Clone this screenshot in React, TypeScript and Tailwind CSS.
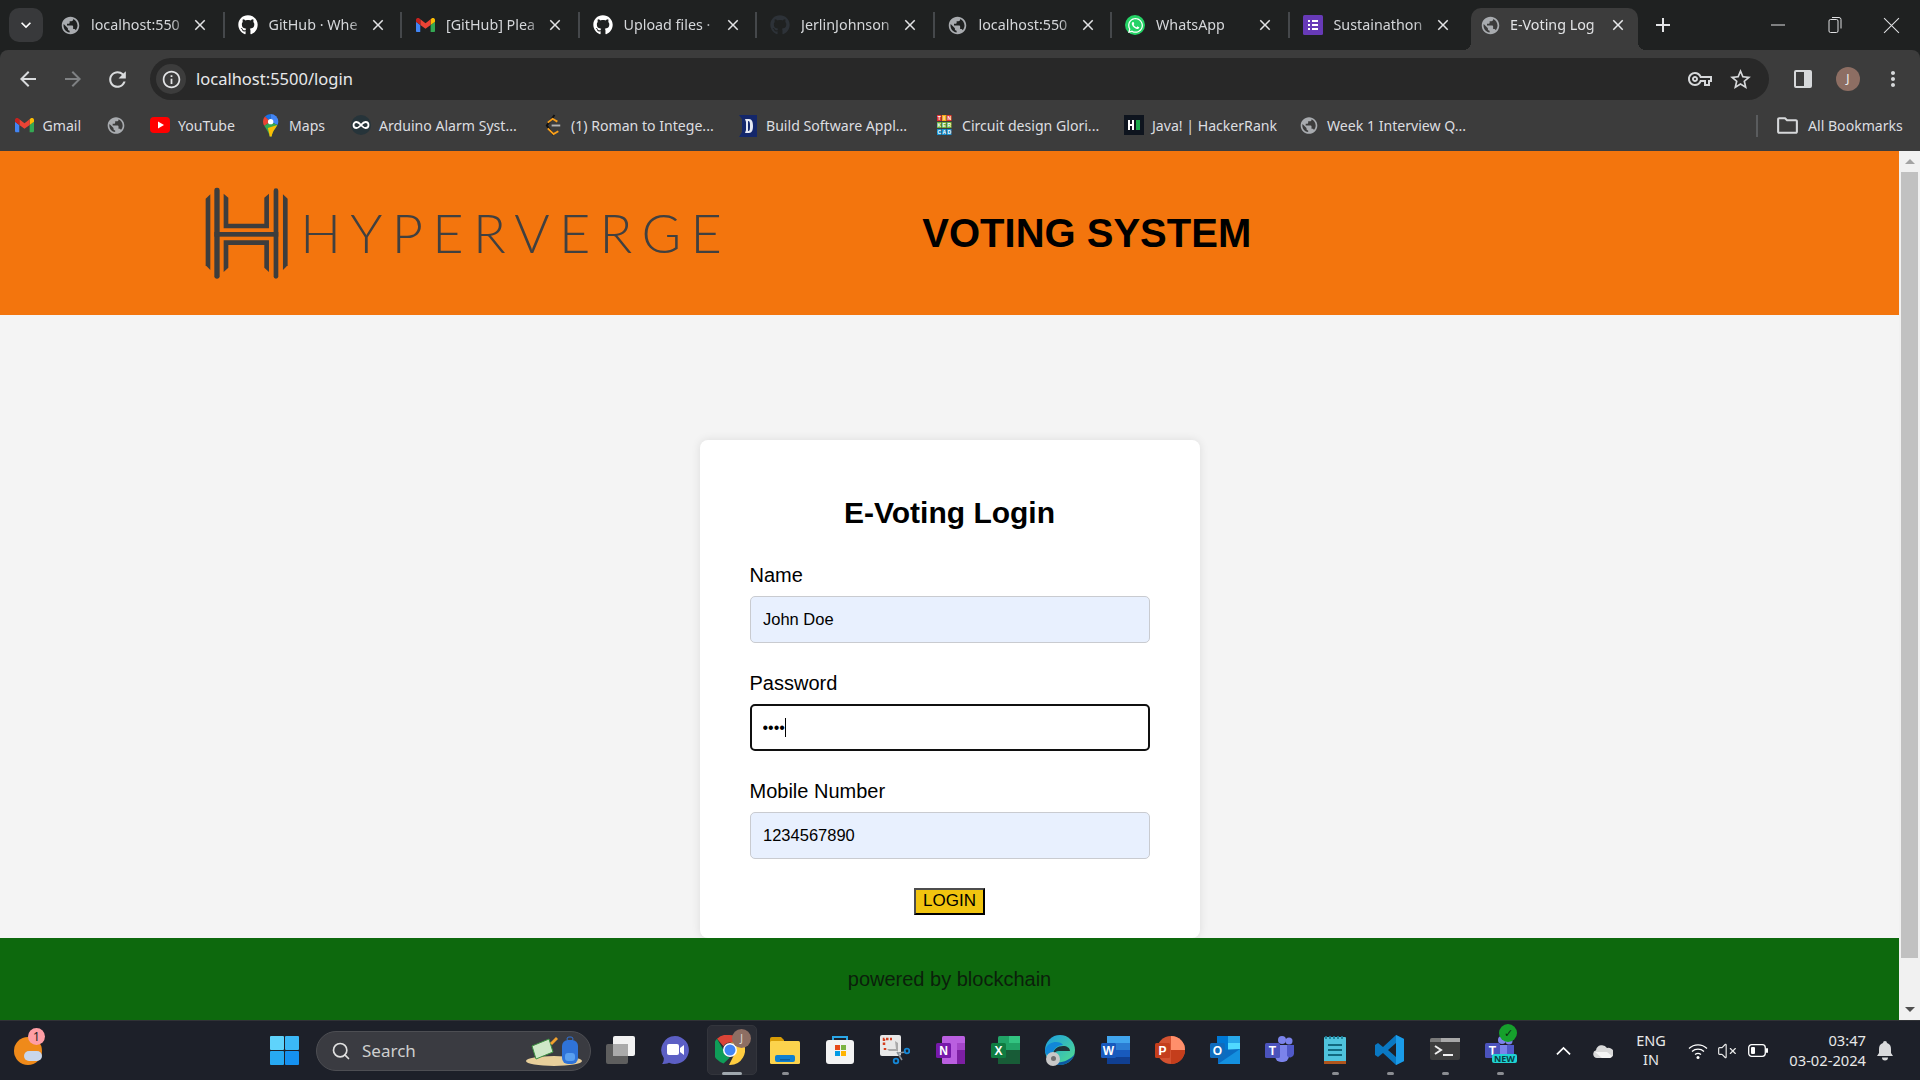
import React from "react";
import {
  MdArrowBack,
  MdArrowForward,
  MdClose,
  MdInfoOutline,
  MdKeyboardArrowDown,
  MdAdd,
  MdMoreVert,
  MdOutlineFolder,
  MdOutlineVpnKey,
  MdPublic,
  MdRefresh,
  MdStarBorder,
} from "react-icons/md";
import { FaGithub, FaWhatsapp } from "react-icons/fa";
import { Search, VolumeX, Infinity as InfinityIcon } from "lucide-react";

const Globe = () => <MdPublic className="size-[21px] text-[#a8abaf]" />;

const Gmail = () => (
  <svg viewBox="0 0 24 18" className="w-[19px]">
    <path fill="#4285f4" d="M1.6 18h3.8V8.7L0 4.6v11.8C0 17.3.7 18 1.6 18z" />
    <path fill="#34a853" d="M18.5 18h3.8c.9 0 1.7-.7 1.7-1.6V4.6l-5.5 4.1" />
    <path fill="#fbbc04" d="M18.5 1.6v7.1L24 4.6V2.4C24 .4 21.7-.8 20.1.4" />
    <path fill="#ea4335" d="M5.5 8.7V1.6L12 6.5l6.5-4.9v7.1L12 13.6" />
    <path fill="#c5221f" d="M0 2.4v2.2l5.5 4.1V1.6L3.9.4C2.3-.8 0 .4 0 2.4z" />
  </svg>
);

const Sheets = () => (
  <svg viewBox="0 0 20 20" className="size-5">
    <rect width="20" height="20" rx="1.5" fill="#673ab7" />
    <path d="M5 5h2v2H5zM5 9h2v2H5zM5 13h2v2H5zM9 5h6v2H9zM9 9h6v2H9zM9 13h6v2H9z" fill="#fff" />
  </svg>
);

const Youtube = () => (
  <svg viewBox="0 0 20 20" className="size-5">
    <rect y="2" width="20" height="16" rx="4" fill="#f00" />
    <path d="M8 6.5v7l6-3.5z" fill="#fff" />
  </svg>
);

const MapsPin = () => (
  <svg viewBox="0 0 16 24" className="h-[23px]">
    <path d="M8 0a8 8 0 0 0-6 2.700L8 8z" fill="#1a73e8" />
    <path d="M8 0a8 8 0 0 1 8 8 8 8 0 0 1-1 3.500L8 8z" fill="#4285f4" />
    <path d="M2 2.700A8 8 0 0 0 0 8c0 1.600.5 3 1.300 4.300L8 8z" fill="#ea4335" />
    <path d="M1.300 12.300 8 8l7 3.500c-1.500 3-5 6-6 12H7c-.6-4-3.700-7.700-5.700-11.200z" fill="#34a853" />
    <path d="M5 14.500 15 11.500c-1.500 3-5 6-6 12H7c-.3-3-1-5-2-9z" fill="#fbbc04" />
    <circle cx="8" cy="8" r="2.800" fill="#fff" />
  </svg>
);

const Arduino = () => (
  <div className="flex size-5 items-center justify-center rounded-full bg-[#26343a]">
    <InfinityIcon className="size-[18px] text-white" strokeWidth={2.4} />
  </div>
);

const Leetcode = () => (
  <svg viewBox="0 0 20 24" className="h-[23px]">
    <path d="M12 1 4 12l7 10" fill="none" stroke="#111" strokeWidth="2" />
    <path d="M9 12h9" stroke="#b3b3b3" strokeWidth="2" />
    <path d="M5 15l6 6 5-3" fill="none" stroke="#f89f1b" strokeWidth="2" />
    <path d="M5 9l5-4 5 3" fill="none" stroke="#f89f1b" strokeWidth="2" />
  </svg>
);

const Duke = () => (
  <svg viewBox="0 0 20 22" className="h-[22px]">
    <path d="M1 0h18v22H1l3-5V4z" fill="#14276b" />
    <path d="M7 4h4c3 0 4 3 4 7s-1 7-4 7H7l1-3V7zm3 2v10c2 0 2-2 2-5s0-5-2-5z" fill="#e6e9f3" />
  </svg>
);

const Tinkercad = () => (
  <svg viewBox="0 0 15 20" className="h-5 w-[15px]">
    {[
      { fill: "#e2342d", letters: "TIN", y: 0 },
      { fill: "#6cb33e", letters: "KER", y: 7 },
      { fill: "#1a8fce", letters: "CAD", y: 14 },
    ].map((row) =>
      row.letters.split("").map((letter, x) => (
        <g key={`${row.y}-${x}`}>
          <rect x={x * 5} y={row.y} width="4.500" height="6" fill={x === 1 && row.y === 0 ? "#f7a81b" : row.fill} />
          <text x={x * 5 + 2.2} y={row.y + 4.8} textAnchor="middle" fontSize="5" fontWeight="700" fill="#fff" fontFamily="'Liberation Sans', sans-serif">
            {letter}
          </text>
        </g>
      )),
    )}
  </svg>
);

const Hackerrank = () => (
  <svg viewBox="0 0 20 20" className="size-5">
    <rect width="20" height="20" fill="#0e141e" />
    <path d="M4 5h2v4h2V5h2v10H8v-4H6v4H4z" fill="#fff" />
    <rect x="12" y="5" width="4" height="10" fill="#1ba94c" />
  </svg>
);

const tabs = [
  { title: "localhost:550", icon: <Globe /> },
  { title: "GitHub · Whe", icon: <FaGithub className="size-5 text-white" /> },
  { title: "[GitHub] Plea", icon: <Gmail /> },
  { title: "Upload files ·", icon: <FaGithub className="size-5 text-white" /> },
  { title: "JerlinJohnson", icon: <FaGithub className="size-5 text-[#2d3238]" /> },
  { title: "localhost:550", icon: <Globe /> },
  {
    title: "WhatsApp",
    icon: (
      <div className="flex size-5 items-center justify-center rounded-full bg-[#25d366]">
        <FaWhatsapp className="size-[17px] text-white" />
      </div>
    ),
  },
  { title: "Sustainathon", icon: <Sheets /> },
];

const bookmarks = [
  { label: "Gmail", icon: <Gmail />, width: "w-[91.5px]" },
  { label: "", icon: <Globe />, width: "w-[44px]" },
  { label: "YouTube", icon: <Youtube />, width: "w-[111px]" },
  { label: "Maps", icon: <MapsPin />, width: "w-[90px]" },
  { label: "Arduino Alarm Syst...", icon: <Arduino />, width: "w-[192px]" },
  { label: "(1) Roman to Intege...", icon: <Leetcode />, width: "w-[195px]" },
  { label: "Build Software Appl...", icon: <Duke />, width: "w-[196px]" },
  { label: "Circuit design Glori...", icon: <Tinkercad />, width: "w-[190px]" },
  { label: "Java! | HackerRank", icon: <Hackerrank />, width: "w-[175px]" },
  { label: "Week 1 Interview Q...", icon: <Globe />, width: "w-[457px]" },
];

const Tab = ({ title, icon, last }: { title: string; icon: React.ReactNode; last: boolean }) => (
  <div className="flex h-full w-[177.5px] shrink-0 items-center">
    <div className="flex w-[44px] justify-center pl-[2px]">{icon}</div>
    <div className="w-[98px] text-[14.3px] whitespace-nowrap text-[#d5d7da] [mask-image:linear-gradient(to_right,black_82%,transparent)]">
      {title}
    </div>
    <MdClose className="ml-[2px] size-[18px] text-[#e2e3e5]" />
    <div className="ml-auto h-[26px] w-[2px] bg-[#45484b]" style={{ opacity: last ? 0 : 1 }} />
  </div>
);

const ActiveTab = () => (
  <div className="relative mt-[8px] mr-[6.5px] ml-[4px] flex h-[42px] w-[167px] shrink-0 items-center rounded-t-[10px] bg-[#3c3c3c] pb-[8px]">
    <div className="absolute bottom-0 left-[-8px] size-[8px] bg-[radial-gradient(circle_at_0_0,transparent_8px,#3c3c3c_8px)]" />
    <div className="absolute right-[-8px] bottom-0 size-[8px] bg-[radial-gradient(circle_at_100%_0,transparent_8px,#3c3c3c_8px)]" />
    <div className="flex w-[39px] justify-center">
      <Globe />
    </div>
    <div className="w-[96px] text-[14.3px] whitespace-nowrap text-[#e3e4e6] [mask-image:linear-gradient(to_right,black_85%,transparent)]">
      E-Voting Log
    </div>
    <MdClose className="ml-[3px] size-[18px] text-[#e8e9eb]" />
  </div>
);

const TabStrip = () => (
  <div className="flex h-[50px] bg-[#1f2121]">
    <div className="ml-[9px] flex h-[34px] w-[34px] translate-y-[8px] items-center justify-center rounded-[10px] bg-[#38393b]">
      <MdKeyboardArrowDown className="size-[20px] text-white" />
    </div>
    <div className="ml-[4px] flex h-full">
      {tabs.map((tab, i) => (
        <Tab key={`${tab.title}-${i}`} {...tab} last={i === tabs.length - 1} />
      ))}
      <ActiveTab />
    </div>
    <div className="ml-[6px] flex items-center">
      <MdAdd className="size-[24px] text-[#e3e4e6]" />
    </div>
    <div className="ml-auto flex h-full text-[#dfe0e2]">
      <div className="flex w-[57px] items-center justify-center">
        <svg viewBox="0 0 14 14" className="size-[14px]">
          <path d="M0 7h14" stroke="currentColor" strokeWidth="1" />
        </svg>
      </div>
      <div className="flex w-[57px] items-center justify-center">
        <svg viewBox="0 0 14 18" className="h-[18px] w-[14px]">
          <rect x="1" y="3.500" width="9" height="13" rx="1.500" fill="none" stroke="currentColor" />
          <path d="M4 1.500h7a2 2 0 0 1 2 2v9" fill="none" stroke="currentColor" />
        </svg>
      </div>
      <div className="flex w-[57px] items-center justify-center">
        <svg viewBox="0 0 16 16" className="size-[17px]">
          <path d="M1 1l14 14M15 1 1 15" stroke="currentColor" strokeWidth="1" />
        </svg>
      </div>
    </div>
  </div>
);

const SidePanel = () => (
  <svg viewBox="0 0 18 18" className="size-[18px]">
    <rect x="1" y="1" width="16" height="16" rx="1" fill="none" stroke="#d6d8da" strokeWidth="2" />
    <rect x="10" y="1" width="7" height="16" fill="#d6d8da" />
  </svg>
);

const Toolbar = () => (
  <div className="flex h-[50px] items-start pt-[8px] pl-[5px]">
    <div className="flex h-[42px] w-[45px] items-center justify-center">
      <MdArrowBack className="size-[24px] text-[#d9dbdd]" />
    </div>
    <div className="flex h-[42px] w-[45px] items-center justify-center">
      <MdArrowForward className="size-[24px] text-[#7f8183]" />
    </div>
    <div className="flex h-[42px] w-[45px] items-center justify-center">
      <MdRefresh className="size-[25px] text-[#d9dbdd]" />
    </div>
    <div className="ml-[10px] flex h-[42px] w-[1619px] items-center rounded-full bg-[#282828] pr-[9px] pl-[6px]">
      <div className="flex size-[30px] items-center justify-center rounded-full bg-[#3c3c3c]">
        <MdInfoOutline className="size-[21px] text-[#e3e4e6]" />
      </div>
      <span className="ml-[10px] text-[16.5px] text-[#e8e9eb]">localhost:5500/login</span>
      <div className="ml-auto flex w-[40px] justify-center">
        <MdOutlineVpnKey className="size-[24px] text-[#d6d8da]" />
      </div>
      <div className="flex w-[40px] justify-center">
        <MdStarBorder className="size-[25px] text-[#d6d8da]" />
      </div>
    </div>
    <div className="ml-[11.5px] flex h-[42px] w-[45px] items-center justify-center">
      <SidePanel />
    </div>
    <div className="flex h-[42px] w-[45px] items-center justify-center">
      <div className="flex size-[24px] items-center justify-center rounded-full bg-[#8d6e63] text-[12px] text-[#eee]">J</div>
    </div>
    <div className="flex h-[42px] w-[45px] items-center justify-center">
      <MdMoreVert className="size-[24px] text-[#d6d8da]" />
    </div>
  </div>
);

const BookmarksBar = () => (
  <div className="flex h-[51px] items-center pl-[14.5px] text-[14.1px] text-[#dcdee0]">
    {bookmarks.map((b) => (
      <div key={b.label + b.width} className={`flex items-center ${b.width}`}>
        <div className="flex w-[20px] shrink-0 justify-center">{b.icon}</div>
        {b.label && <span className="ml-[8px] whitespace-nowrap">{b.label}</span>}
      </div>
    ))}
    <div className="h-[22px] w-[2px] bg-[#5a5c5e]" />
    <MdOutlineFolder className="ml-[16.5px] size-[25px] text-[#d6d8da]" />
    <span className="ml-[8.5px] whitespace-nowrap">All Bookmarks</span>
  </div>
);

const HyperVergeMark = () => (
  <svg viewBox="30 20 250 282" className="h-[94px] w-[83.3px] shrink-0" fill="#3d3d3d">
    <path d="M32 58l14-13v227l-14-14z" />
    <rect x="58" y="25" width="16" height="273" rx="7" />
    <path d="M86 43l14 12v78h108V55l14-12v104H86z" />
    <rect x="58" y="158" width="192" height="14" />
    <path d="M86 183h136v95l-14-13v-68H100v68l-14 13z" />
    <rect x="236" y="27" width="14" height="271" rx="7" />
    <path d="M264 45l14 13v200l-14 14z" />
  </svg>
);

const Header = () => (
  <header className="flex h-[164px] shrink-0 items-center bg-[#f3750d] pl-[205px]">
    <HyperVergeMark />
    <span className="ml-[12px] w-[622px] shrink-0 font-['Lato'] text-[54px] leading-none font-light tracking-[9.3px] whitespace-nowrap text-[#404040]">
      HYPERVERGE
    </span>
    <h1 className="text-[40px] font-bold text-black">VOTING SYSTEM</h1>
  </header>
);

const Field = ({ label, className, children }: { label: string; className?: string; children: React.ReactNode }) => (
  <div className={className}>
    <label className="mb-[9px] block h-[23px] text-[20px] leading-[23px] text-black">{label}</label>
    {children}
  </div>
);

const inputClass =
  "block h-[47px] w-[400px] rounded-[5px] border border-[#c9cbd0] bg-[#e8f0fe] pr-[12px] pl-[12.500px] text-[16.500px] text-black outline-none";

const LoginCard = () => (
  <div className="h-[498px] w-[500px] rounded-[8px] bg-white px-[50px] pt-[54px] shadow-[0_0_10px_rgba(0,0,0,0.1)]">
    <h2 className="mb-[33px] text-center text-[30px] leading-[37px] font-bold text-black">E-Voting Login</h2>
    <Field label="Name">
      <input className={inputClass} defaultValue="John Doe" readOnly />
    </Field>
    <Field label="Password" className="mt-[29px]">
      <div className="relative">
        <input
          type="password"
          className="block h-[47px] w-[400px] rounded-[5px] border-2 border-[#101010] bg-white px-[11px] text-[16px] text-black outline-none"
          defaultValue="abcd"
          readOnly
        />
        <div className="absolute top-[14px] left-[35px] h-[19px] w-px bg-black" />
      </div>
    </Field>
    <Field label="Mobile Number" className="mt-[29px]">
      <input className={inputClass} defaultValue="1234567890" readOnly />
    </Field>
    <div className="mt-[29px] flex justify-center">
      <button className="h-[27px] w-[71px] border-2 border-t-[#4d4d4d] border-r-black border-b-black border-l-[#4d4d4d] bg-[#f1c40f] pb-[2px] text-[17px] leading-none text-black">
        LOGIN
      </button>
    </div>
  </div>
);

const Scrollbar = () => (
  <div className="flex w-[21px] shrink-0 flex-col items-center bg-[#f1f1f1]">
    <div className="flex h-[21px] items-center justify-center">
      <div className="h-0 w-0 border-r-[5px] border-b-[5px] border-l-[5px] border-r-transparent border-b-[#a3a3a3] border-l-transparent" />
    </div>
    <div className="h-[786px] w-[17px] bg-[#c1c1c1]" />
    <div className="mt-auto flex h-[21px] items-center justify-center">
      <div className="h-0 w-0 border-t-[5px] border-r-[5px] border-l-[5px] border-t-[#505050] border-r-transparent border-l-transparent" />
    </div>
  </div>
);

const planeFont = "'Liberation Sans', Arial, sans-serif";

const Plate = ({ x = 1, fill, letter }: { x?: number; fill: string; letter: string }) => (
  <>
    <rect x={x} y="8" width="15" height="15" rx="1.500" fill={fill} />
    <text x={x + 7.5} y="20" textAnchor="middle" fontSize="12" fontWeight="700" fill="#fff" fontFamily={planeFont}>
      {letter}
    </text>
  </>
);

const Icon = ({ children }: { children: React.ReactNode }) => (
  <svg viewBox="0 0 30 30" className="size-[30px]">
    {children}
  </svg>
);

const TeamsGlyph = () => (
  <>
    <circle cx="24" cy="6" r="3.500" fill="#7b83eb" />
    <circle cx="17" cy="5" r="4" fill="#7b83eb" />
    <path d="M10 10h14v11a6 6 0 0 1-6 6h-2a6 6 0 0 1-6-6z" fill="#7b83eb" />
    <path d="M22 10h7v9a4 4 0 0 1-7 2z" fill="#5059c9" />
  </>
);

const taskIcons: { name: string; dot?: boolean; node: React.ReactNode }[] = [
  {
    name: "taskview",
    node: (
      <Icon>
        <rect x="1" y="9" width="22" height="20" rx="2" fill="#5e5e5e" />
        <rect x="8" y="1" width="22" height="20" rx="2" fill="#f2f2f2" />
        <rect x="8" y="9" width="15" height="12" fill="#aaa" />
      </Icon>
    ),
  },
  {
    name: "meet",
    node: (
      <Icon>
        <path d="M15 1a14 14 0 1 1-6 26.700C7 28.800 4 29 2 29c1-1 2-3 1.800-6A14 14 0 0 1 15 1z" fill="#5c5fc4" />
        <rect x="7" y="9" width="12" height="11" rx="2" fill="#fff" />
        <path d="M20 13l4-3v10l-4-3z" fill="#fff" />
      </Icon>
    ),
  },
  {
    name: "chrome",
    node: (
      <div className="relative">
        <Icon>
          <path d="M15 0a15 15 0 0 1 13 7.500H15a7.500 7.500 0 0 0-6.500 3.750L2 3.800A15 15 0 0 1 15 0z" fill="#db4437" />
          <path d="M2 3.800l6.500 11.200A7.500 7.500 0 0 0 15 22.500L8.500 28.500A15 15 0 0 1 2 3.800z" fill="#0f9d58" />
          <path d="M28 7.500A15 15 0 0 1 15 30h-1l7.500-15a7.500 7.500 0 0 0-6.500-7.500z" fill="#ffcd40" />
          <circle cx="15" cy="15" r="7" fill="#fff" />
          <circle cx="15" cy="15" r="5.500" fill="#4285f4" />
        </Icon>
        <div className="absolute top-[-6px] right-[-6px] flex size-[19px] items-center justify-center rounded-full bg-[#8d6e63] text-[10px] text-[#ddd]">
          J
        </div>
      </div>
    ),
  },
  {
    name: "explorer",
    dot: true,
    node: (
      <Icon>
        <path d="M0 4a2 2 0 0 1 2-2h9l3 3v3H0z" fill="#d89c06" />
        <rect y="6" width="30" height="23" rx="1.500" fill="#fcd34d" />
        <rect x="5" y="20" width="20" height="7" rx="2" fill="#0f7fd0" />
        <rect x="10" y="24" width="10" height="1.500" fill="#0a5ea0" />
      </Icon>
    ),
  },
  {
    name: "store",
    node: (
      <Icon>
        <path d="M8 6V2h14v4" fill="none" stroke="#2aa7e8" strokeWidth="2" />
        <rect x="1" y="5" width="28" height="24" rx="3" fill="#f3f3f3" />
        <rect x="10" y="10" width="5" height="5" fill="#e64a19" />
        <rect x="16" y="10" width="5" height="5" fill="#7cb342" />
        <rect x="10" y="16" width="5" height="5" fill="#039be5" />
        <rect x="16" y="16" width="5" height="5" fill="#ffb300" />
      </Icon>
    ),
  },
  {
    name: "snip",
    node: (
      <Icon>
        <rect x="0" y="0" width="21" height="21" rx="2" fill="#e8e8e8" />
        <path d="M4 10V4h8" fill="none" stroke="#d43f1f" strokeWidth="2.500" strokeDasharray="2.500 1.500" />
        <path d="M5 13v2" stroke="#d43f1f" strokeWidth="2.500" />
        <path d="M15 6l3 2v8h-9l-2-2h9z" fill="#a9a9a9" />
        <path d="M17 17l5 8M18 18l8-1" stroke="#8a9299" strokeWidth="1.500" />
        <circle cx="27" cy="16" r="2.300" fill="none" stroke="#1587d6" strokeWidth="1.800" />
        <circle cx="16" cy="26" r="2.300" fill="none" stroke="#1587d6" strokeWidth="1.800" />
      </Icon>
    ),
  },
  {
    name: "onenote",
    node: (
      <Icon>
        <rect x="7" y="1" width="23" height="28" rx="1.500" fill="#ba5fe0" />
        <rect x="22" y="15" width="8" height="14" fill="#7d1fa3" />
        <rect x="22" y="8" width="8" height="7" fill="#a445c9" />
        <Plate fill="#7719aa" letter="N" />
      </Icon>
    ),
  },
  {
    name: "excel",
    node: (
      <Icon>
        <rect x="8" y="1" width="22" height="28" rx="1.500" fill="#21a366" />
        <rect x="8" y="15" width="22" height="14" fill="#185c37" />
        <rect x="19" y="1" width="11" height="7" fill="#33c481" />
        <Plate fill="#107c41" letter="X" />
      </Icon>
    ),
  },
  {
    name: "edge",
    node: (
      <div className="relative">
        <svg viewBox="0 0 30 30" className="size-[30px]">
          <defs>
            <linearGradient id="edgeTop" x1="0" y1="0" x2="1" y2="1">
              <stop offset="0" stopColor="#1b9de2" />
              <stop offset="1" stopColor="#54e08a" />
            </linearGradient>
          </defs>
          <circle cx="15" cy="15" r="15" fill="url(#edgeTop)" />
          <path d="M30 19c-2 5-7 11-15 11-4 0-7-1-9-4 8 3 17 1 24-7z" fill="#0c59a4" />
          <path d="M8 20c0-6 5-9 10-9 4 0 7 2 7 5H14c-3 0-5 2-6 4z" fill="#1e2129" opacity="0.9" />
          <path d="M0 15c2-6 7-8 11-8 3 0 6 1 7 3-6 0-10 4-12 12-3-1-6-3-6-7z" fill="#1187d8" />
        </svg>
        <div className="absolute top-[17px] left-[1px] flex size-[14px] items-center justify-center rounded-full bg-[#c8c8c8]">
          <div className="size-[5px] rounded-full bg-[#707070]" />
        </div>
      </div>
    ),
  },
  {
    name: "word",
    node: (
      <Icon>
        <rect x="7" y="1" width="23" height="28" rx="1.500" fill="#2b7cd3" />
        <rect x="7" y="1" width="23" height="7" fill="#41a5ee" />
        <rect x="7" y="15" width="23" height="7" fill="#185abd" />
        <rect x="7" y="22" width="23" height="7" fill="#103f91" />
        <Plate fill="#185abd" letter="W" />
      </Icon>
    ),
  },
  {
    name: "powerpoint",
    node: (
      <Icon>
        <circle cx="16" cy="15" r="14" fill="#d35230" />
        <path d="M16 1a14 14 0 0 1 14 14H16z" fill="#ff8f6b" />
        <path d="M16 15h14a14 14 0 0 1-14 14z" fill="#c43e1c" />
        <Plate x={0} fill="#c43e1c" letter="P" />
      </Icon>
    ),
  },
  {
    name: "outlook",
    node: (
      <Icon>
        <rect x="7" y="1" width="23" height="14" fill="#0078d4" />
        <rect x="18" y="1" width="12" height="7" fill="#28a8ea" />
        <rect x="18" y="8" width="12" height="7" fill="#50d9ff" />
        <path d="M8 15l22-1v15H8z" fill="#0a6cc2" />
        <path d="M8 29l22-15v15z" fill="#1490df" />
        <Plate x={0} fill="#0f6cbd" letter="O" />
      </Icon>
    ),
  },
  {
    name: "teams",
    node: (
      <Icon>
        <TeamsGlyph />
        <Plate x={0} fill="#4b53bc" letter="T" />
      </Icon>
    ),
  },
  {
    name: "notepad",
    dot: true,
    node: (
      <Icon>
        <rect x="4" y="2" width="22" height="27" rx="1" fill="#4fc3dc" />
        <path d="M6 1v3M10 1v3M14 1v3M18 1v3M22 1v3" stroke="#1c7f99" strokeWidth="1.800" />
        <rect x="4" y="26" width="22" height="3" fill="#b0551c" />
        <path d="M8 10h14M8 15h14M8 20h14" stroke="#12697f" strokeWidth="2" />
      </Icon>
    ),
  },
  {
    name: "vscode",
    dot: true,
    node: (
      <Icon>
        <path fillRule="evenodd" d="M21 0l8 4v22l-8 4L8 18l-5 4-3-2v-10l3-2 5 4zM21 8l-8 7 8 7z" fill="#0a78c2" />
        <path d="M21 0l8 4v22l-8 4z" fill="#1a9be8" />
      </Icon>
    ),
  },
  {
    name: "terminal",
    dot: true,
    node: (
      <Icon>
        <rect y="3" width="30" height="22" rx="2" fill="#3d3d3d" />
        <path d="M0 5a2 2 0 0 1 2-2h26a2 2 0 0 1 2 2v2H0z" fill="#7a7a7a" />
        <rect x="11" y="3" width="19" height="4" fill="#a8a8a8" />
        <path d="M5 11l6 4-6 4" fill="none" stroke="#eee" strokeWidth="2" />
        <path d="M13 20h10" stroke="#eee" strokeWidth="2" />
      </Icon>
    ),
  },
  {
    name: "teamsnew",
    dot: true,
    node: (
      <div className="relative">
        <Icon>
          <TeamsGlyph />
          <Plate x={0} fill="#4b53bc" letter="T" />
        </Icon>
        <div className="absolute top-[-11px] left-[14px] flex size-[18px] items-center justify-center rounded-full bg-[#16a02c] text-[11px] leading-none text-[#0c2a10]">
          ✓
        </div>
        <div className="absolute top-[19px] left-[7px] rounded-[2px] bg-[#1fd3d3] px-[2px] text-[9px] leading-[9px] font-bold text-[#073f44]">
          NEW
        </div>
      </div>
    ),
  },
];

const SearchArt = () => (
  <svg viewBox="0 0 58 32" className="h-[32px] w-[58px]">
    <ellipse cx="29" cy="26" rx="28" ry="5" fill="#e8cf9b" />
    <path d="M7 11l17-7 4 13-17 7z" fill="#cfe8c8" stroke="#3e9142" strokeWidth="1" />
    <path d="M25 8l6-6 2 2-6 6z" fill="#f2a12e" />
    <rect x="37" y="5" width="16" height="24" rx="6" fill="#2f73d9" />
    <rect x="40" y="18" width="10" height="8" rx="3" fill="#5aa0f0" />
    <rect x="42" y="2" width="6" height="4" rx="2" fill="none" stroke="#2f73d9" />
  </svg>
);

const Taskbar = () => (
  <div className="flex h-[60px] shrink-0 items-center border-t border-[#303236] bg-[#1d2029] font-['Noto_Sans'] text-[#e8e8e8]">
    <div className="relative flex h-full w-[55px] items-center justify-center">
      <div className="relative size-[28px] rounded-full bg-[#ef8a1a]">
        <div className="absolute top-[14px] left-[10px] h-[10px] w-[18px] rounded-full bg-[#c9d6ea]" />
      </div>
      <div className="absolute top-[7px] left-[28px] flex size-[17px] items-center justify-center rounded-full bg-[#ff9ea5] text-[12px] text-[#222]">
        1
      </div>
    </div>
    <div className="ml-[201.5px] flex h-full w-[55px] items-center justify-center">
      <svg viewBox="0 0 29 29" className="size-[29px]">
        <rect width="14" height="14" rx="1" fill="#5fd3fb" />
        <rect x="15" width="14" height="14" rx="1" fill="#3bb8f7" />
        <rect y="15" width="14" height="14" rx="1" fill="#27a9f2" />
        <rect x="15" y="15" width="14" height="14" rx="1" fill="#1591f0" />
      </svg>
    </div>
    <div className="ml-[4.5px] flex h-[40px] w-[275px] items-center rounded-full border border-[#4d4e53] bg-[#3a3b41] pr-[7px] pl-[14px]">
      <Search className="size-[20px] text-[#e0e0e0]" />
      <span className="ml-[11px] text-[17px] text-[#cfcfcf]">Search</span>
      <div className="ml-auto">
        <SearchArt />
      </div>
    </div>
    <div className="ml-[1.5px] flex h-full">
      {taskIcons.map((t) => (
        <div key={t.name} className="relative flex h-full w-[55px] items-center justify-center">
          {t.name === "chrome" && (
            <div className="absolute top-[4px] left-[4px] h-[50px] w-[50px] rounded-[5px] border border-[#33353c] bg-[#2b2d35]" />
          )}
          <div className="relative -translate-y-[1px]">{t.node}</div>
          {t.name === "chrome" && (
            <div className="absolute top-[51px] left-[19px] h-[3px] w-[20px] rounded-full bg-[#a0a8ae]" />
          )}
          {t.dot && <div className="absolute top-[51px] left-[24px] h-[3px] w-[7px] rounded-full bg-[#8b8d92]" />}
        </div>
      ))}
    </div>
    <div className="ml-[15.5px] flex h-full items-center">
      <div className="flex w-[40px] justify-center">
        <svg viewBox="0 0 16 10" className="w-[15px]">
          <path d="M1 9l7-7 7 7" fill="none" stroke="#fff" strokeWidth="1.800" />
        </svg>
      </div>
      <div className="flex w-[40px] justify-center">
        <svg viewBox="0 0 20 14" className="w-[20px]">
          <path d="M4 14a4 4 0 0 1-1-7.800A6 6 0 0 1 14 4a5 5 0 0 1 3 10z" fill="#d9d9d9" />
          <path d="M2 8l7 6h8l2-2-5-4z" fill="#f5f5f5" />
        </svg>
      </div>
      <div className="w-[56px] -translate-y-[1px] text-center text-[14.5px] leading-[19px]">
        <div>ENG</div>
        <div>IN</div>
      </div>
      <div className="ml-[5px] flex w-[28px] justify-center">
        <svg viewBox="0 0 20 16" className="w-[20px]">
          <path d="M1 5.500a13 13 0 0 1 18 0M4 8.500a9 9 0 0 1 12 0M7 11.500a5 5 0 0 1 6 0" fill="none" stroke="#fff" strokeWidth="1.300" />
          <circle cx="10" cy="14.500" r="1.500" fill="#fff" />
        </svg>
      </div>
      <div className="flex w-[30px] justify-center">
        <VolumeX className="size-[20px] text-[#e8e8e8]" strokeWidth={1.4} />
      </div>
      <div className="flex w-[32px] justify-center">
        <svg viewBox="0 0 20 13" className="w-[20px]">
          <rect x="0.700" y="0.700" width="16.600" height="11.600" rx="3" fill="none" stroke="#fff" strokeWidth="1.300" />
          <rect x="3" y="3" width="4" height="7" rx="1" fill="#fff" />
          <rect x="18" y="4" width="2" height="5" rx="1" fill="#fff" />
        </svg>
      </div>
      <div className="w-[92px] -translate-y-[1.5px] text-right text-[14.7px] leading-[20px]">
        <div>03:47</div>
        <div>03-02-2024</div>
      </div>
      <div className="ml-[4px] flex w-[30px] justify-center">
        <svg viewBox="0 0 16 20" className="w-[16px]">
          <path d="M8 0a2 2 0 0 1 2 2c3 1 4 3 4 6v4l2 3H0l2-3V8c0-3 1-5 4-6a2 2 0 0 1 2-2zM5 16.500h6a3 3 0 0 1-6 0z" fill="#d9dadc" />
        </svg>
      </div>
    </div>
  </div>
);

export default function App() {
  return (
    <div className="flex h-screen w-full flex-col overflow-hidden bg-[#1f2121] font-['Liberation_Sans',Arial,sans-serif]">
      <div className="shrink-0 font-['Noto_Sans',sans-serif]">
        <TabStrip />
        <div className="h-[101px] rounded-t-[8px] bg-[#3c3c3c]">
          <Toolbar />
          <BookmarksBar />
        </div>
      </div>
      <div className="flex min-h-0 flex-1">
        <div className="flex min-w-0 flex-1 flex-col bg-[#f4f4f4]">
          <Header />
          <main className="flex min-h-0 flex-1 justify-center overflow-hidden pt-[125px]">
            <LoginCard />
          </main>
          <footer className="flex h-[82px] shrink-0 items-center justify-center bg-[#0d690d] text-[20px] text-[#0b1f0b]">
            powered by blockchain
          </footer>
        </div>
        <Scrollbar />
      </div>
      <Taskbar />
    </div>
  );
}
